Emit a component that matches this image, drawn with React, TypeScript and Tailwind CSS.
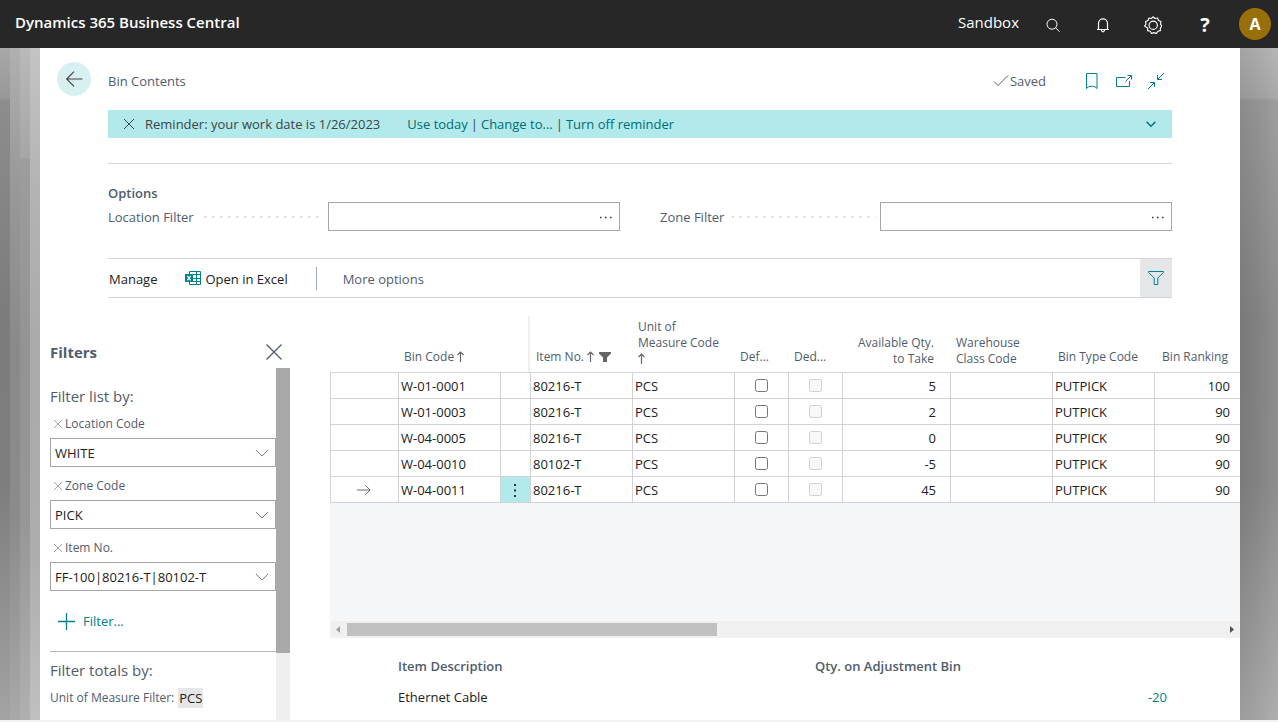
import * as React from "react"
import clsx from "clsx"

interface BinRow {
  bin: string
  item: string
  qty: string
  ranking: string
  selected?: boolean
}

interface FilterField {
  id: string
  label: string
  value: string
}

const rows: BinRow[] = [
  { bin: "W-01-0001", item: "80216-T", qty: "5", ranking: "100" },
  { bin: "W-01-0003", item: "80216-T", qty: "2", ranking: "90" },
  { bin: "W-04-0005", item: "80216-T", qty: "0", ranking: "90" },
  { bin: "W-04-0010", item: "80102-T", qty: "-5", ranking: "90" },
  { bin: "W-04-0011", item: "80216-T", qty: "45", ranking: "90", selected: true },
]

const filters: FilterField[] = [
  { id: "location-code", label: "Location Code", value: "WHITE" },
  { id: "zone-code", label: "Zone Code", value: "PICK" },
  { id: "item-no", label: "Item No.", value: "FF-100|80216-T|80102-T" },
]

interface IconProps {
  className?: string
  size?: number
  children: React.ReactNode
}

// Thin line icon on a 16 unit grid
function Icon({ className, size = 16, children }: IconProps) {
  return (
    <svg
      width={size}
      height={size}
      viewBox="0 0 16 16"
      fill="none"
      stroke="currentColor"
      aria-hidden="true"
      className={clsx("block shrink-0", className)}
    >
      {children}
    </svg>
  )
}

const gearPath =
  "M8 .7l1.8 1.5 2.300-.4.800 2.200 2.200.9-.4 2.300L16 9l-1.500 1.700.1 2.300-2.300.6-1.200 2-2.200-.8-2.200.8-1.200-2-2.300-.6.1-2.300L.500 9l1.300-1.800-.4-2.300 2.200-.9.800-2.200 2.300.4z"

function TopBar() {
  return (
    <header className="flex h-12 items-center bg-[#272727] pr-[7px] pl-[15px] text-white">
      <h1 className="mb-1 text-[15px] leading-5 font-semibold">Dynamics 365 Business Central</h1>
      <span className="mr-[9px] mb-1 ml-auto text-[15px] leading-5">Sandbox</span>
      <button aria-label="Search" className="flex w-[50px] justify-center pt-[2px]">
        <Icon>
          <circle cx="7" cy="7.200" r="5" />
          <path d="M10.500 10.700l4 4" />
        </Icon>
      </button>
      <button aria-label="Notifications" className="flex w-[50px] justify-center pt-[2px]">
        <Icon>
          <path
            d="M3.500 12.500V6.300a4.500 4.500 0 0 1 9 0v6.200M2 12.500h12M6.500 13c.2 1.300 .8 1.800 1.500 1.800s1.300-.5 1.500-1.800"
            strokeWidth="1.200"
          />
        </Icon>
      </button>
      <button aria-label="Settings" className="flex w-[50px] justify-center pt-[2px]">
        <Icon size={18}>
          <path d={gearPath} strokeLinejoin="round" />
          <circle cx="8.200" cy="8.200" r="3.700" />
        </Icon>
      </button>
      <button aria-label="Help" className="w-[54px] pt-[2px] text-xl leading-6 font-bold">
        ?
      </button>
      <button
        aria-label="Account"
        className="ml-[7px] size-8 rounded-full bg-[#986f0b] text-base leading-6 font-bold"
      >
        A
      </button>
    </header>
  )
}

function PageTitle() {
  return (
    <div className="flex items-center pt-[14px] pr-[76px] pl-[17px]">
      <button
        aria-label="Back"
        className="flex size-[34px] items-center justify-center rounded-full bg-[#d9f0f2] text-[#424242]"
      >
        <Icon size={18}>
          <path d="M15.500 8H1.500M8 1.500L1.500 8 8 14.500" />
        </Icon>
      </button>
      <h2 className="mt-1 ml-[17px] leading-5 text-[#505c6d]">Bin Contents</h2>
      <div className="mt-1 mr-[38px] ml-auto flex items-center text-[#505c6d]">
        <Icon>
          <path d="M1 8.500l4 4L15 2.500" />
        </Icon>
        <span className="ml-px leading-5">Saved</span>
      </div>
      <div className="mt-1 flex gap-4 text-[#00808a]">
        <button aria-label="Bookmark">
          <Icon>
            <path d="M2.500 .5h10.500v15l-2-1.700c-2-.8-4.500-.8-6.500 0l-2 1.700z" />
          </Icon>
        </button>
        <button aria-label="Open in new window">
          <Icon>
            <path d="M9.500 4.500h-9v9h13V8M9.500 8.500l6-6M11.500 2.500h4v4" />
          </Icon>
        </button>
        <button aria-label="Collapse">
          <Icon>
            <path d="M16 0L9.500 6.500M9.500 2v4.500H14M0 16l6.500-6.500M2 9.500h4.500V14" />
          </Icon>
        </button>
      </div>
    </div>
  )
}

function Reminder() {
  return (
    <div className="mx-[68px] mt-[14px] flex h-7 items-center bg-[#b2e9ea] pr-[14px] pl-[13px] text-[#3b4648]">
      <button aria-label="Dismiss">
        <Icon>
          <path d="M3 3l10 10M13 3L3 13" />
        </Icon>
      </button>
      <span className="ml-2">Reminder: your work date is 1/26/2023</span>
      <div className="ml-[27px] flex gap-[3px] text-[#006d75]">
        <a href="#today">Use today</a>
        <span className="text-[#3b4648]">|</span>
        <a href="#change">Change to...</a>
        <span className="text-[#3b4648]">|</span>
        <a href="#off">Turn off reminder</a>
      </div>
      <button aria-label="Expand" className="ml-auto text-[#006d75]">
        <Icon size={14}>
          <path d="M3 5.500l5 5 5-5" strokeWidth="1.600" />
        </Icon>
      </button>
    </div>
  )
}

function OptionField({ id, label }: { id: string; label: string }) {
  return (
    <div className="flex h-[29px] items-center">
      <label htmlFor={id} className="flex w-[220px] shrink-0 items-center">
        {label}
        <span className="mr-1 ml-2 h-[2px] flex-1 bg-[linear-gradient(to_right,#d4d4d8_2px,transparent_2px)] bg-[length:8px_2px] bg-right" />
      </label>
      <div className="flex h-full min-w-0 flex-1 items-center border border-[#a6a6a6] pr-[5px]">
        <input id={id} className="h-full min-w-0 flex-1 px-1 outline-none" />
        <button aria-label={`Look up ${label}`} className="text-[#333]">
          <Icon>
            <path d="M2 8.500h1.500M7 8.500h1.500M12 8.500h1.500" strokeWidth="1.500" />
          </Icon>
        </button>
      </div>
    </div>
  )
}

function Options() {
  return (
    <section className="mx-[68px] mt-[25px] border-t border-[#d3d5d9] pt-5 text-[#505c6d]">
      <h3 className="leading-[18px] font-semibold">Options</h3>
      <div className="grid grid-cols-2 gap-10">
        <OptionField id="location-filter" label="Location Filter" />
        <OptionField id="zone-filter" label="Zone Filter" />
      </div>
    </section>
  )
}

function ExcelIcon() {
  return (
    <svg width="16" height="14" viewBox="0 0 16 14" aria-hidden="true" className="block">
      <path d="M4.500 .5h11v13h-11zM4.500 3.500h11M4.500 7.500h11M4.500 10.500h11M11.500 .5v13" fill="none" stroke="#00808a" />
      <path d="M0 3h8v8H0z" fill="#00808a" />
      <path d="M2.300 4.800l3.400 4.500M5.700 4.800L2.300 9.300" fill="none" stroke="#fff" strokeWidth="1.200" />
    </svg>
  )
}

function ActionBar() {
  return (
    <div className="mx-[68px] mt-[27px] flex h-10 items-center border-y border-[#d3d5d9] pl-px text-[#212121]">
      <button className="pt-[2px]">Manage</button>
      <button className="ml-7 flex items-center gap-1">
        <ExcelIcon />
        <span className="pt-[2px]">Open in Excel</span>
      </button>
      <div className="ml-7 h-[23px] w-px bg-[#a3abb7]" />
      <button className="ml-[26px] pt-[2px] text-[#505c6d]">More options</button>
      <button
        aria-label="Toggle filter"
        className="ml-auto flex h-full w-8 items-center justify-center rounded-l-xs bg-[#e5e6e8] text-[#00808a]"
      >
        <Icon>
          <path d="M.5 1.500h15v.8L9.800 8v6.500H6.200V8L.5 2.300z" />
        </Icon>
      </button>
    </div>
  )
}

function FilterPane() {
  return (
    <aside className="flex w-60 shrink-0 flex-col text-[#505c6d]">
      <div className="flex items-center justify-between pt-11 pr-2">
        <h3 className="text-[15px] leading-5 font-bold">Filters</h3>
        <button aria-label="Close filters">
          <Icon>
            <path d="M.5 .5l15 15M15.500 .5l-15 15" strokeWidth="1.300" />
          </Icon>
        </button>
      </div>
      <div className="mt-[6px] flex flex-1">
        <div className="min-w-0 flex-1">
          <h4 className="mt-[18px] text-[15px] leading-5">Filter list by:</h4>
          {filters.map((field) => (
            <div key={field.id} className="mt-2 pb-px">
              <div className="flex h-5 items-center pl-[3px] text-xs">
                <button aria-label={`Remove ${field.label}`} className="text-[#7b8492]">
                  <Icon size={10}>
                    <path d="M1.500 1.500l13 13M14.500 1.500l-13 13" strokeWidth="1.200" />
                  </Icon>
                </button>
                <label htmlFor={field.id} className="ml-[2px]">
                  {field.label}
                </label>
              </div>
              <div className="relative mt-1">
                <select
                  id={field.id}
                  className="block h-[29px] w-full appearance-none border border-[#a6a6a6] bg-white pr-7 pl-1 text-[#212121]"
                >
                  <option>{field.value}</option>
                </select>
                <Icon size={14} className="pointer-events-none absolute top-2 right-[7px] text-[#666]">
                  <path d="M1 4.500l7 7 7-7" />
                </Icon>
              </div>
            </div>
          ))}
          <button className="mt-[19px] ml-2 flex h-5 items-center gap-2 text-[#00808a]">
            <Icon size={17}>
              <path d="M8 0v16M0 8h16" strokeWidth="1.200" />
            </Icon>
            Filter...
          </button>
          <div className="mt-5 border-t border-[#b5bac2] pt-2 pb-[11px]">
            <h4 className="text-[15px] leading-5">Filter totals by:</h4>
            <div className="mt-2 flex h-5 items-center gap-1 text-xs">
              Unit of Measure Filter:
              <span className="bg-[#e5e6e8] px-px text-[13px] leading-5 text-[#212121]">PCS</span>
            </div>
          </div>
        </div>
        <div className="w-[14px] bg-[#efefef]">
          <div className="h-[285px] bg-[#a9a9a9]" />
        </div>
      </div>
    </aside>
  )
}

function SortArrow() {
  return (
    <svg
      width="7"
      height="11"
      viewBox="0 0 7 11"
      fill="none"
      stroke="#666"
      aria-label="Ascending"
      className="inline-block align-[-1px]"
    >
      <path d="M3.500 11V1M.5 4l3-3 3 3" strokeWidth="1.200" />
    </svg>
  )
}

const headClass = "pb-[7px] pl-[6px] text-left align-bottom font-normal whitespace-nowrap"
const wrappedHeadClass = "pb-[5px] pl-[6px] text-left align-bottom font-normal whitespace-nowrap"
const cellClass = "h-[26px] border-t border-l border-[#d0d3d9] py-0 pl-[2px]"
const centerCellClass = "h-[26px] border-t border-l border-[#d0d3d9] py-0 pr-px pl-0"

function BinTable() {
  return (
    <table className="w-full table-fixed border-separate border-spacing-0 text-[#212121]">
      <colgroup>
        <col className="w-[68px]" />
        <col className="w-[102px]" />
        <col className="w-[30px]" />
        <col className="w-[102px]" />
        <col className="w-[102px]" />
        <col className="w-[54px]" />
        <col className="w-[54px]" />
        <col className="w-[108px]" />
        <col className="w-[102px]" />
        <col className="w-[102px]" />
        <col />
      </colgroup>
      <thead>
        <tr className="h-14 text-xs leading-4 text-[#505c6d]">
          <th aria-label="Row marker" />
          <th className={headClass}>
            Bin Code <SortArrow />
          </th>
          <th aria-label="Row menu" className="border-r-2 border-[#f0f0f1]" />
          <th className={headClass}>
            Item No. <SortArrow />
            <svg
              width="12"
              height="10"
              viewBox="0 0 12 10"
              className="ml-[5px] inline-block align-[-1px]"
              aria-label="Filtered"
            >
              <path d="M0 0h12v1.500L8 5.500V10H4V5.500L0 1.500z" fill="#666" />
            </svg>
          </th>
          <th className={wrappedHeadClass}>
            Unit of
            <br />
            Measure Code
            <br />
            <SortArrow />
          </th>
          <th className={headClass}>Def...</th>
          <th className={headClass}>Ded...</th>
          <th className="pr-4 pb-[5px] text-right align-bottom font-normal whitespace-nowrap">
            Available Qty.
            <br />
            to Take
          </th>
          <th className={wrappedHeadClass}>
            Warehouse
            <br />
            Class Code
          </th>
          <th className={headClass}>Bin Type Code</th>
          <th className="pr-3 pb-[7px] text-right align-bottom font-normal whitespace-nowrap">Bin Ranking</th>
        </tr>
      </thead>
      <tbody>
        {rows.map((row) => (
          <tr key={row.bin}>
            <td className={centerCellClass}>
              {row.selected && (
                <Icon size={14} className="mx-auto text-[#555]">
                  <path d="M0 8h15M9.500 2.500L15 8l-5.500 5.500" />
                </Icon>
              )}
            </td>
            <td className={cellClass}>{row.bin}</td>
            <td className={clsx(centerCellClass, row.selected && "bg-[#b2e9ea]")}>
              {row.selected && (
                <button aria-label="Row actions" className="mx-auto block">
                  <Icon>
                    <path d="M8 2v2M8 7.500v2M8 13v2" stroke="#333" strokeWidth="2" />
                  </Icon>
                </button>
              )}
            </td>
            <td className={cellClass}>{row.item}</td>
            <td className={cellClass}>PCS</td>
            <td className={centerCellClass}>
              <input type="checkbox" aria-label="Default" className="mx-auto block" />
            </td>
            <td className={centerCellClass}>
              <input type="checkbox" aria-label="Dedicated" disabled className="mx-auto block" />
            </td>
            <td className="h-[26px] border-t border-l border-[#d0d3d9] py-0 pr-[14px] text-right">{row.qty}</td>
            <td className={cellClass} />
            <td className={cellClass}>PUTPICK</td>
            <td className="h-[26px] border-t border-l border-[#d0d3d9] py-0 pr-[10px] text-right">{row.ranking}</td>
          </tr>
        ))}
      </tbody>
    </table>
  )
}

function BinList() {
  return (
    <section className="ml-10 min-w-0 flex-1 pt-[18px]">
      <BinTable />
      <div className="h-[119px] border-t border-[#d0d3d9] bg-[#f5f6f8]" />
      <div className="flex h-[17px] items-center justify-between bg-[#f0f0f0]">
        <div className="flex flex-1 items-center">
          <svg width="17" height="9" viewBox="0 0 17 9" aria-hidden="true">
            <path d="M10 1v7L6 4.500z" fill="#a0a0a0" />
          </svg>
          <div className="h-[13px] w-[370px] bg-[#c1c1c1]" />
        </div>
        <svg width="17" height="9" viewBox="0 0 17 9" aria-hidden="true">
          <path d="M7 1v7l4-3.500z" fill="#505050" />
        </svg>
      </div>
      <div className="mx-[68px] mt-[18px] grid grid-cols-2 gap-x-[60px] gap-y-[11px] leading-5">
        <h4 className="font-semibold text-[#505c6d]">Item Description</h4>
        <h4 className="font-semibold text-[#505c6d]">Qty. on Adjustment Bin</h4>
        <span className="text-[#212121]">Ethernet Cable</span>
        <a href="#adjustment" className="pr-[5px] text-right text-[#00808a]">
          -20
        </a>
      </div>
    </section>
  )
}

export default function App() {
  return (
    <div className="flex min-h-screen flex-col bg-[#f3f3f3] font-['Open_Sans','Noto_Sans',sans-serif] text-[13px] leading-5">
      <TopBar />
      <div className="mb-[2px] flex flex-1">
        {/* Edges of the pages stacked under this one */}
        <div className="flex w-10 shrink-0">
          <div className="flex-1 bg-[linear-gradient(#a8a8a8,#989898_50px,#8d8d8d_52px,#7c7c7c_40%,#7e7e7e_65%,#a3a3a3)]" />
          <div className="flex-1 bg-[linear-gradient(#b0b0b0,#999999_20%,#898989_45%,#8b8b8b_70%,#a8a8a8)]" />
          <div className="flex-1 bg-[linear-gradient(#b9b9b9,#a6a6a6_110px,#9c9d9c_112px,#929392_45%,#959695_70%,#b0b0b0)]" />
          <div className="flex-1 bg-[linear-gradient(#c4c4c4,#b4b4b4_20%,#aaaaaa_45%,#adadad_75%,#c0c0c0)]" />
        </div>
        <main className="flex min-w-0 flex-1 flex-col bg-white">
          <PageTitle />
          <Reminder />
          <Options />
          <ActionBar />
          <div className="flex flex-1 pl-[10px]">
            <FilterPane />
            <BinList />
          </div>
        </main>
        <div className="w-[38px] shrink-0 bg-[linear-gradient(#aeaeae,#a0a0a0_50px,#949494_52px,#818181_40%,#828282_65%,#a5a6a5)]">
          <div className="h-full bg-linear-to-r from-black/5 to-white/10" />
        </div>
      </div>
    </div>
  )
}
